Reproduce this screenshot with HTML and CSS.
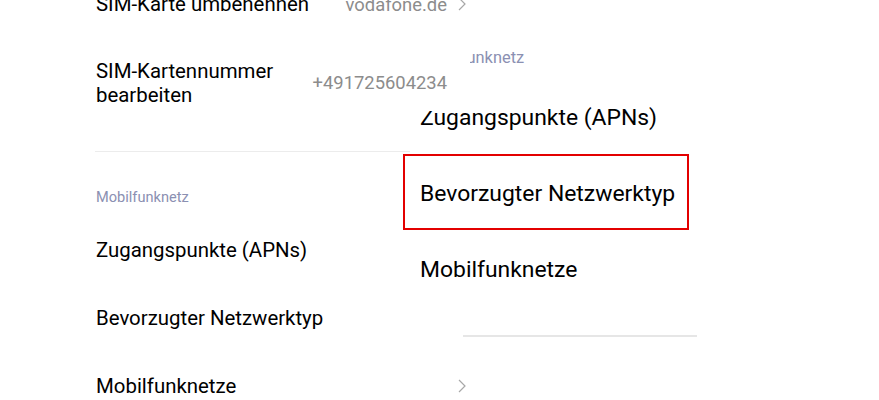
FILE: index.html
```html
<!DOCTYPE html>
<html lang="de">
<head>
<meta charset="utf-8">
<title>Mobilfunknetz</title>
<link rel="stylesheet" href="styles.css">
</head>
<body>
<div class="page">
  <div class="list">
    <div class="row row-top">
      <span class="label">SIM-Karte umbenennen</span>
      <span class="value">vodafone.de</span>
      <svg class="chev" viewBox="0 0 8 14" width="8" height="14"><polyline points="1,1 7,7 1,13" /></svg>
    </div>
    <div class="row row-sim">
      <span class="label">SIM-Kartennummer<br>bearbeiten</span>
      <span class="value">+491725604234</span>
      <svg class="chev" viewBox="0 0 8 14" width="8" height="14"><polyline points="1,1 7,7 1,13" /></svg>
    </div>
    <div class="divider"></div>
    <div class="section">Mobilfunknetz</div>
    <div class="row item"><span class="label">Zugangspunkte (APNs)</span></div>
    <div class="row item"><span class="label">Bevorzugter Netzwerktyp</span></div>
    <div class="row item">
      <span class="label">Mobilfunknetze</span>
      <span class="value"></span>
      <svg class="chev" viewBox="0 0 8 14" width="8" height="14"><polyline points="1,1 7,7 1,13" /></svg>
    </div>
  </div>

  <div class="zoom">
    <div class="zoom-section"><span class="zoom-section-text">Mobilfunknetz</span></div>
    <div class="zoom-item">Zugangspunkte (APNs)</div>
    <div class="zoom-item highlight">Bevorzugter Netzwerktyp</div>
    <div class="zoom-item">Mobilfunknetze</div>
    <div class="zoom-divider"></div>
  </div>
</div>
</body>
</html>
```

FILE: styles.css
```css
html, body {
  margin: 0;
  padding: 0;
  background: #ffffff;
}

body {
  font-family: Roboto, "Noto Sans", "Liberation Sans", sans-serif;
  color: #000000;
  width: 879px;
  height: 400px;
  overflow: hidden;
}

.page {
  position: relative;
  display: flow-root;
  width: 879px;
  height: 400px;
  overflow: hidden;
}

.list {
  margin-top: -21px;
  margin-left: 96px;
  width: 370px;
  display: flex;
  flex-direction: column;
}

.row {
  display: flex;
  align-items: center;
}

.label {
  font-size: 20.4px;
  line-height: 24px;
  flex: 1;
  white-space: nowrap;
}

.value {
  font-size: 18.4px;
  color: #8c8c8c;
  margin-right: 11px;
  white-space: nowrap;
}

.chev {
  flex: none;
  fill: none;
  stroke: #a8a8a8;
  stroke-width: 1.2;
}

.row-top {
  height: 50px;
}

.row-sim {
  height: 107px;
}

.divider {
  margin-top: 15px;
  height: 1px;
  background: #ececec;
  width: 330px;
  margin-left: -1px;
}

.section {
  padding-top: 36px;
  padding-bottom: 10px;
  font-size: 14.6px;
  line-height: 18px;
  color: #8b90b2;
}

.item {
  height: 68px;
}

/* magnified overlay */
.zoom {
  position: absolute;
  left: 410px;
  top: 40px;
  width: 290px;
  height: 300px;
  background: #ffffff;
  display: flex;
  flex-direction: column;
  clip-path: polygon(42px 0, 100% 0, 100% 100%, -7px 100%, -7px 71px, 42px 71px);
}

.zoom-section {
  position: relative;
  padding: 8px 0 11px 10px;
  font-size: 16.4px;
  line-height: 20px;
  color: #8b90b2;
  white-space: nowrap;
}

.zoom-section::before {
  content: "";
  position: absolute;
  left: 0;
  top: 0;
  width: 60px;
  height: 39px;
  background: #ffffff;
}

.zoom-item {
  position: relative;
  height: 76px;
  display: flex;
  align-items: center;
  padding-left: 10px;
  font-size: 22.9px;
  white-space: nowrap;
}

.highlight::after {
  content: "";
  position: absolute;
  left: -7px;
  top: -1px;
  width: 282px;
  height: 72px;
  border: 2px solid #e30000;
}

.zoom-divider {
  margin-top: 28px;
  margin-left: 53px;
  width: 234px;
  height: 2px;
  background: #e6e6e6;
}
```
